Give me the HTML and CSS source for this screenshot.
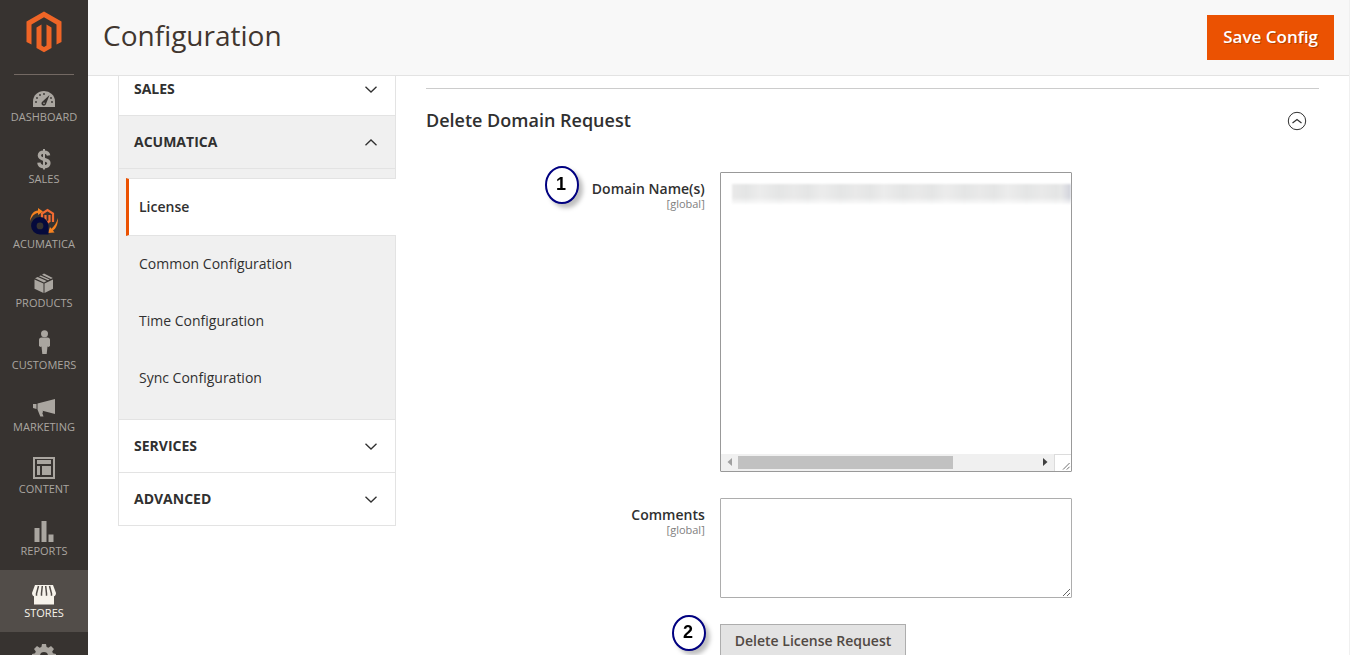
FILE: index.html
```html
<!DOCTYPE html>
<html lang="en">
<head>
<meta charset="utf-8">
<meta name="viewport" content="width=device-width, initial-scale=1">
<title>Configuration</title>
<link rel="stylesheet" href="styles.css">
</head>
<body class="app">
<nav class="menu" aria-label="Main">
  <a class="menu-logo" href="#" aria-label="Home">
    <svg width="36" height="42" viewBox="0 0 36 42" fill="#ef6526"><path d="M18 .5.5 10.500V31L5.500 33.500V13.500L18 6.300l12.500 7.200v20l5-2.500V10.500z"/><path d="M10.500 16.500 15.500 13.500V34.500L18 36l2.500-1.500v-21l5 3V37L18 41.300 10.500 37z"/></svg>
  </a>
  <a class="menu-item" href="#"><svg class="icon" viewBox="0 0 32 28"><path fill="currentColor" d="M5 25V19.500a11 10.500 0 0 1 22 0V25z"/><g fill="#373330"><circle cx="8" cy="20" r=".9"/><circle cx="9" cy="16" r=".9"/><circle cx="12" cy="13" r=".9"/><circle cx="16" cy="12" r=".9"/><circle cx="24" cy="20" r=".9"/><circle cx="23" cy="16" r=".9"/><path d="m21.500 13-3.500 9a2.300 2.300 0 1 1-3.500-2.500z"/></g><circle cx="16" cy="21.300" r=".8" fill="currentColor"/></svg>Dashboard</a>
  <a class="menu-item" href="#"><svg class="icon" viewBox="0 0 32 28" fill="none" stroke="currentColor"><path stroke-width="3.400" d="M20.600 11.500c-.3-2.400-2-3.400-4.600-3.400-2.800 0-4.600 1.300-4.600 3.500 0 5.200 9.500 2.600 9.500 7.400 0 2.300-1.900 3.700-4.900 3.700-2.900 0-4.900-1.200-5.100-4"/><path stroke-width="2" d="M16 5v20.500"/></svg>Sales</a>
  <a class="menu-item" href="#"><svg class="icon icon-tall" viewBox="0 0 32 31"><path fill="none" stroke="#f26b32" stroke-width="2.200" d="M14 15V7.500L19.500 4 25 7.500V16M17.500 16V9M21.500 16V9M17.500 15l2 1.500 2-1.500"/><path fill="#f58220" d="M2 15C2.500 8 6 4.500 10 4.500V2l5 3.500-5 3.500V7C6.500 7.500 4 10 2 15zM30 12c0 7-2.500 11-5 12.500l1.500 2-6.500.500 2-6 1.500 1.800C26 20.500 28.500 17 30 12z"/><path fill="#050a3c" fill-rule="evenodd" d="M20.500 28.500H12a8.700 8.700 0 1 1 8.500-9zM12 16.500a3.400 3.400 0 1 0 0 6.800 3.400 3.400 0 0 0 0-6.800z"/></svg>Acumatica</a>
  <a class="menu-item" href="#"><svg class="icon" viewBox="0 0 32 28" fill="currentColor"><path d="m6.500 11.500 9 4V25l-9-4.300zM16.500 15.500l8.500-4v9.200L16.500 25zM7 10.300l2.700-1.400 9 4-2.700 1.500zM11 8.300l1.700-.9 9 4-1.700.9zM14 6.700 16 5.500l8.800 4.400-1.900 1z"/></svg>Products</a>
  <a class="menu-item" href="#"><svg class="icon" viewBox="0 0 32 28" fill="currentColor"><circle cx="16.500" cy="3.700" r="3.500"/><path d="M13.500 7.500h6a2.500 2.500 0 0 1 2.500 2.500v6l-1.500 1-1-.5-.8 7.500h-4.400l-.8-7.500-1 .5-1.500-1v-6a2.500 2.500 0 0 1 2.500-2.500z"/></svg>Customers</a>
  <a class="menu-item" href="#"><svg class="icon" viewBox="0 0 32 28" fill="currentColor"><path d="M5 12h3.500v5L5 16zM9.500 11.500 27 7v15l-12.500-3.200.6 1.200-.8 1 1.200 3.500h-3.200L9.500 17.500z"/></svg>Marketing</a>
  <a class="menu-item" href="#"><svg class="icon" viewBox="0 0 32 28" fill="currentColor"><path fill-rule="evenodd" d="M5 3h22v22H5zM7 5v18h18V5z"/><path d="M9 6h14v4H9zM9 12h3v9H9zM14 12h9v9h-9z"/></svg>Content</a>
  <a class="menu-item" href="#"><svg class="icon" viewBox="0 0 32 28" fill="currentColor"><path d="M6.500 12h5v14h-5zM13.500 5h5v21h-5zM20.500 18.500h5V26h-5z"/></svg>Reports</a>
  <a class="menu-item menu-item-active" href="#" aria-current="page"><svg class="icon" viewBox="0 0 32 28"><path fill="currentColor" d="M7 7h18l3 8c0 2-1 3-2 3.200V26.500H6V18.200C5 18 4 17 4 15z"/><path fill="none" stroke="#524d49" stroke-width="1.500" d="m10.500 8-2 7.500v2.200M14.300 8l-.8 7.500v2.200M17.700 8l.8 7.500v2.200M21.500 8l2 7.500v2.200"/></svg>Stores</a>
  <a class="menu-item" href="#" aria-label="System"><svg class="icon" viewBox="0 0 32 28"><path fill="currentColor" fill-rule="evenodd" d="M14 4h4l.6 3 1.800.8 2.600-1.800 3 3-1.800 2.600.7 1.700 3.100.7v4l-3.100.6-.7 1.800 1.800 2.600-3 3-2.600-1.800-1.800.8-.6 3h-4l-.6-3-1.800-.8L9 26l-3-3 1.800-2.600-.7-1.800L4 18v-4l3.100-.7.7-1.700L6 9l3-3 2.600 1.800 1.800-.8zM16 12a4 4 0 1 0 0 8 4 4 0 0 0 0-8z"/></svg></a>
</nav>
<div class="page">
  <header class="page-header">
    <h1 class="page-title">Configuration</h1>
    <button class="btn-primary" type="button">Save Config</button>
  </header>
  <main class="content">
    <aside class="tabs">
      <button class="tab tab-first" type="button">Sales<svg class="chevron" viewBox="0 0 12 7"><path d="m.5.700 5.500 5.300 5.500-5.300"/></svg></button>
      <button class="tab tab-open" type="button" aria-expanded="true">Acumatica<svg class="chevron" viewBox="0 0 12 7"><path d="m.5 6.300 5.500-5.300 5.500 5.300"/></svg></button>
      <div class="subtabs">
        <a class="subtab subtab-active" href="#" aria-current="page">License</a>
        <a class="subtab" href="#">Common Configuration</a>
        <a class="subtab" href="#">Time Configuration</a>
        <a class="subtab" href="#">Sync Configuration</a>
      </div>
      <button class="tab" type="button">Services<svg class="chevron" viewBox="0 0 12 7"><path d="m.5.700 5.500 5.300 5.500-5.300"/></svg></button>
      <button class="tab" type="button">Advanced<svg class="chevron" viewBox="0 0 12 7"><path d="m.5.700 5.500 5.300 5.500-5.300"/></svg></button>
    </aside>
    <section class="section">
      <div class="section-head">
        <h2 class="section-title">Delete Domain Request</h2>
        <button class="collapse" type="button" aria-label="Collapse section"><svg width="20" height="20" viewBox="0 0 20 20" fill="none" stroke="#303030"><circle cx="10" cy="10" r="8.700"/><path stroke-width="1.200" d="m5.500 12 4.500-3.500 4.500 3.500"/></svg></button>
      </div>
      <form class="form">
        <div class="field">
          <div class="field-label">
            <svg class="badge" viewBox="0 0 36 40"><ellipse cx="18" cy="20" rx="16" ry="18"/><text x="17" y="25">1</text></svg>
            <label for="domains">Domain Name(s)<span class="scope">[global]</span></label>
          </div>
          <div class="box">
            <textarea class="box-input" id="domains"></textarea>
            <span class="redacted"></span>
            <div class="scrollbar">
              <svg class="arrow arrow-off" viewBox="0 0 17 16"><path d="M11 4v8L6.500 8z"/></svg>
              <span class="track"><span class="thumb"></span></span>
              <svg class="arrow" viewBox="0 0 17 16"><path d="M6 4v8l4.500-4z"/></svg>
              <svg class="grip" viewBox="0 0 17 17"><path d="m8.500 15.500 7-7M12.500 15.500l3-3"/></svg>
            </div>
          </div>
        </div>
        <div class="field">
          <div class="field-label">
            <label for="comments">Comments<span class="scope">[global]</span></label>
          </div>
          <textarea class="textarea" id="comments"></textarea>
        </div>
        <div class="field">
          <div class="field-badge">
            <svg class="badge" viewBox="0 0 36 40"><ellipse cx="18" cy="21" rx="16" ry="17"/><text x="17" y="26">2</text></svg>
          </div>
          <div><button class="btn-secondary" type="button">Delete License Request</button></div>
        </div>
      </form>
    </section>
  </main>
</div>
</body>
</html>
```
FILE: styles.css
```css
* { box-sizing: border-box; }

.app {
  margin: 0;
  height: 100vh;
  overflow: hidden;
  display: flex;
  background: #fff;
  color: #303030;
  font: 14px/20px "Open Sans", "Noto Sans", sans-serif;
}

button, textarea { font: inherit; color: inherit; }

/* Main menu */
.menu { flex: 0 0 88px; background: #373330; overflow: hidden; }
.menu-logo {
  display: flex;
  justify-content: center;
  margin: 0 14px -1px;
  padding: 11px 0 21px;
  border-bottom: 1px solid #736963;
}
.menu-logo svg { display: block; }
.menu-item {
  display: flex;
  flex-direction: column;
  align-items: center;
  height: 62px;
  padding-top: 8px;
  color: #aaa6a0;
  font-size: 11px;
  line-height: 14px;
  text-transform: uppercase;
  text-decoration: none;
}
.menu-item-active { background: #524d49; color: #f7f3eb; }
.icon { flex: none; width: 32px; height: 28px; overflow: visible; }
.icon-tall { height: 31px; }

/* Page */
.page {
  flex: 1;
  min-width: 0;
  display: flex;
  flex-direction: column;
  border-right: 1px solid #f0f0f0;
}
.page-header {
  flex: none;
  display: flex;
  align-items: flex-start;
  justify-content: space-between;
  padding: 15px;
  background: #f8f8f8;
  border-bottom: 1px solid #e3e3e3;
}
.page-title { margin: 0; color: #41362f; font-size: 28px; font-weight: 400; line-height: 40px; }
.btn-primary {
  height: 45px;
  padding: 0 16px 2px;
  border: 0;
  background: #eb5202;
  color: #fff;
  font-size: 17px;
  font-weight: 600;
  text-shadow: 1px 1px 0 rgba(0, 0, 0, .25);
}
.content {
  flex: 1;
  min-height: 0;
  overflow: hidden;
  display: grid;
  grid-template-columns: 278px minmax(0, 1fr);
  align-items: start;
  gap: 30px;
  padding: 0 30px;
}

/* Section tabs */
.tabs { display: flex; flex-direction: column; border-bottom: 1px solid #e3e3e3; }
.tab {
  display: flex;
  align-items: center;
  justify-content: space-between;
  height: 53px;
  padding: 0 18px 0 15px;
  border: 1px solid #e3e3e3;
  border-bottom: 0;
  background: #fff;
  font-weight: 700;
  text-transform: uppercase;
}
.tab-first { height: 39px; padding-bottom: 13px; border-top: 0; }
.tab-open { background: #f0f0f0; }
.chevron { width: 12px; height: 7px; overflow: visible; fill: none; stroke: #303030; stroke-width: 1.3; }
.subtabs { padding: 9px 0 12px 7px; border: 1px solid #e3e3e3; border-bottom: 0; background: #f0f0f0; }
.subtab {
  display: block;
  padding: 18px 13px 19px;
  color: #303030;
  text-decoration: none;
}
.subtab-active {
  margin-right: -1px;
  padding: 18px 10px;
  border: 1px solid #e3e3e3;
  border-left: 3px solid #eb5202;
  border-right: 0;
  background: #fff;
  font-weight: 600;
}

/* Form section */
.section { margin-top: 12px; border-top: 1px solid #ccc; }
.section-head { display: flex; align-items: flex-end; justify-content: space-between; padding: 20px 12px 0 0; }
.section-title { margin: 0; font-size: 18px; font-weight: 600; line-height: 22px; }
.collapse { display: block; padding: 0; border: 0; background: none; }
.collapse svg { display: block; }
.form { display: grid; gap: 26px; padding-top: 41px; }
.field { display: grid; grid-template-columns: 5fr 6fr 4.2fr; }
.field-label { display: flex; align-items: flex-start; justify-content: flex-end; gap: 12px; padding-right: 15px; font-weight: 600; line-height: 19px; text-align: right; }
.field-label label { padding-top: 7px; }
.field-badge { display: flex; justify-content: flex-end; padding-right: 13px; margin-top: -12px; }
.scope { display: block; color: #808080; font-size: 11px; font-weight: 400; line-height: 12px; }
.badge {
  flex: none;
  width: 36px;
  height: 40px;
  margin-top: -7px;
  overflow: visible;
  filter: drop-shadow(4px 4px 2px rgba(0, 0, 0, .25));
}
.field-badge .badge { margin-top: 0; }
.badge ellipse { fill: #fff; stroke: #000080; stroke-width: 2; }
.badge text { font: bold 18px "Liberation Sans", Arial, sans-serif; text-anchor: middle; fill: #000; }

.box { position: relative; display: flex; flex-direction: column; height: 300px; border: 1px solid #999; border-radius: 1px; }
.box-input { flex: 1; width: 100%; border: 0; padding: 8px 10px; resize: none; outline: 0; background: #fff; }
.redacted {
  position: absolute;
  top: 11px;
  left: 11px;
  right: 0;
  height: 20px;
  background:
    linear-gradient(to bottom, transparent 65%, rgba(255, 255, 255, .8)),
    linear-gradient(to right, transparent 97%, #cfd1da),
    repeating-linear-gradient(90deg, #e9e9e9 0, #e4e5e5 14px, #ececec 28px, #e4e5e5 47px, #e9e9e9 62px);
  filter: blur(1px);
  clip-path: inset(-4px 0 -4px -4px);
}
.scrollbar { display: flex; height: 17px; background: #f0f0f0; }
.arrow { width: 17px; height: 16px; fill: #404040; }
.arrow-off { fill: #a0a0a0; }
.track { flex: 1; padding: 2px 0; }
.thumb { display: block; width: 72%; height: 13px; background: #c1c1c1; }
.grip { width: 17px; height: 17px; border: 1px solid #dcdcdc; border-width: 1px 0 0 1px; background: #fff; fill: none; stroke: #666; }
.textarea { display: block; width: 100%; height: 100px; border: 1px solid #adadad; border-radius: 1px; background: #fff; resize: both; }
.btn-secondary { height: 34px; padding: 0 14px; border: 1px solid #adadad; background: #e3e3e3; color: #514943; font-weight: 600; }
```
